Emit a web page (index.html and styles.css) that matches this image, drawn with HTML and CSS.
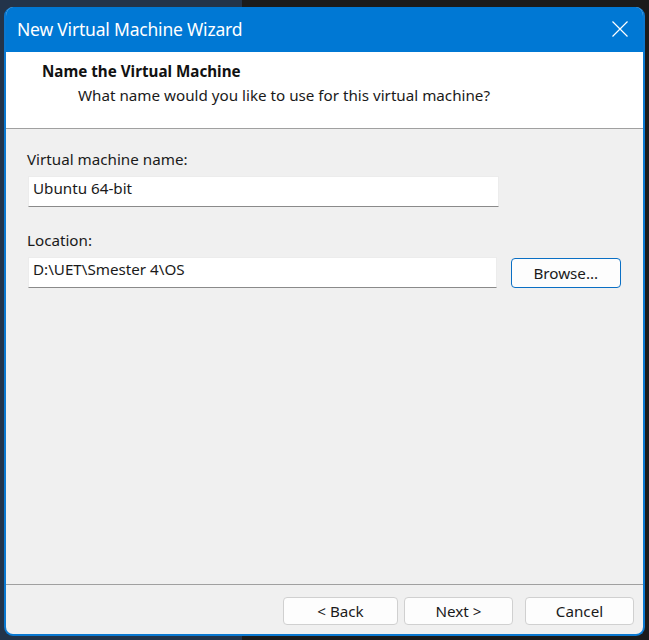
FILE: index.html
```html
<!DOCTYPE html>
<html>
<head>
<meta charset="utf-8">
<link rel="stylesheet" href="styles.css">
</head>
<body>
<div class="desktop">
  <div class="window">
    <div class="titlebar">
      <span class="title">New Virtual Machine Wizard</span>
      <svg class="close" width="16" height="16" viewBox="0 0 16 16"><path d="M0.5 0.5 L15.5 15.5 M15.5 0.5 L0.5 15.5" stroke="#ffffff" stroke-width="1.2" fill="none"/></svg>
    </div>
    <div class="header">
      <div class="h-title">Name the Virtual Machine</div>
      <div class="h-sub">What name would you like to use for this virtual machine?</div>
    </div>
    <div class="content">
      <div class="label">Virtual machine name:</div>
      <div class="row">
        <div class="input">Ubuntu 64-bit</div>
      </div>
      <div class="label label-2">Location:</div>
      <div class="row">
        <div class="input">D:\UET\Smester 4\OS</div>
        <div class="btn btn-browse">Browse...</div>
      </div>
    </div>
    <div class="footer">
      <div class="btn btn-back">&lt; Back</div>
      <div class="btn btn-next">Next &gt;</div>
      <div class="btn btn-cancel">Cancel</div>
    </div>
  </div>
</div>
</body>
</html>
```
FILE: styles.css
```css
html, body {
  margin: 0;
  padding: 0;
}
body {
  width: 649px;
  height: 640px;
  overflow: hidden;
  background: linear-gradient(to right, #23344a 0, #23344a 242px, #1b1b1b 242px);
  font-family: "Noto Sans", "Open Sans", sans-serif;
}
.desktop {
  position: relative;
  width: 649px;
  height: 640px;
}
.window {
  position: absolute;
  left: 4px;
  top: 7px;
  width: 641px;
  height: 629px;
  box-sizing: border-box;
  border: 2px solid #0a78d0;
  border-top: none;
  border-radius: 9px;
  background: #f0f0f0;
  display: flex;
  flex-direction: column;
  overflow: hidden;
}
.titlebar {
  height: 45px;
  flex: none;
  background: #0078d4;
  display: flex;
  align-items: center;
  justify-content: space-between;
  padding: 0 15px 0 11px;
  color: #ffffff;
}
.title {
  font-size: 17.5px;
  letter-spacing: -0.2px;
  margin-top: -2px;
}
.close {
  display: block;
  margin-top: -2px;
}
.header {
  flex: none;
  background: #ffffff;
  border-bottom: 1px solid #a0a0a0;
  box-sizing: border-box;
  height: 77px;
  padding-top: 9px;
}
.h-title {
  font-size: 15.2px;
  font-weight: bold;
  color: #111111;
  margin-left: 36px;
  line-height: 20px;
}
.h-sub {
  font-size: 15.2px;
  color: #1a1a1a;
  margin-left: 72px;
  line-height: 20px;
  margin-top: 4px;
}
.content {
  flex: 1;
  padding: 20px 22px 0 21px;
  color: #1a1a1a;
  font-size: 15.2px;
}
.label {
  line-height: 20px;
  height: 20px;
}
.label-2 {
  margin-top: 23px;
}
.row {
  display: flex;
  align-items: flex-start;
  gap: 14px;
  margin-top: 7px;
}
.input {
  width: 471px;
  height: 31px;
  box-sizing: border-box;
  background: #ffffff;
  border: 1px solid #ececec;
  border-bottom: 1px solid #8a8a8a;
  padding: 0 0 0 4px;
  line-height: 22px;
  margin-left: 1px;
}
.btn {
  box-sizing: border-box;
  height: 28px;
  width: 109px;
  background: #fdfdfd;
  border: 1px solid #d0d0d0;
  border-radius: 4px;
  display: flex;
  align-items: center;
  justify-content: center;
  font-size: 15.2px;
  color: #1a1a1a;
  padding-bottom: 1px;
}
.btn-browse {
  width: 111px;
  height: 30px;
  border: 1px solid #0a6fc4;
  margin-top: 1px;
}
.footer {
  flex: none;
  height: 50px;
  box-sizing: border-box;
  border-top: 1px solid #a0a0a0;
  display: flex;
  justify-content: flex-end;
  padding: 12px 9px 0 0;
}
.btn-back {
  width: 115px;
}
.btn-next {
  width: 109px;
  margin-left: 6px;
}
.btn-cancel {
  width: 109px;
  margin-left: 12px;
}
```
